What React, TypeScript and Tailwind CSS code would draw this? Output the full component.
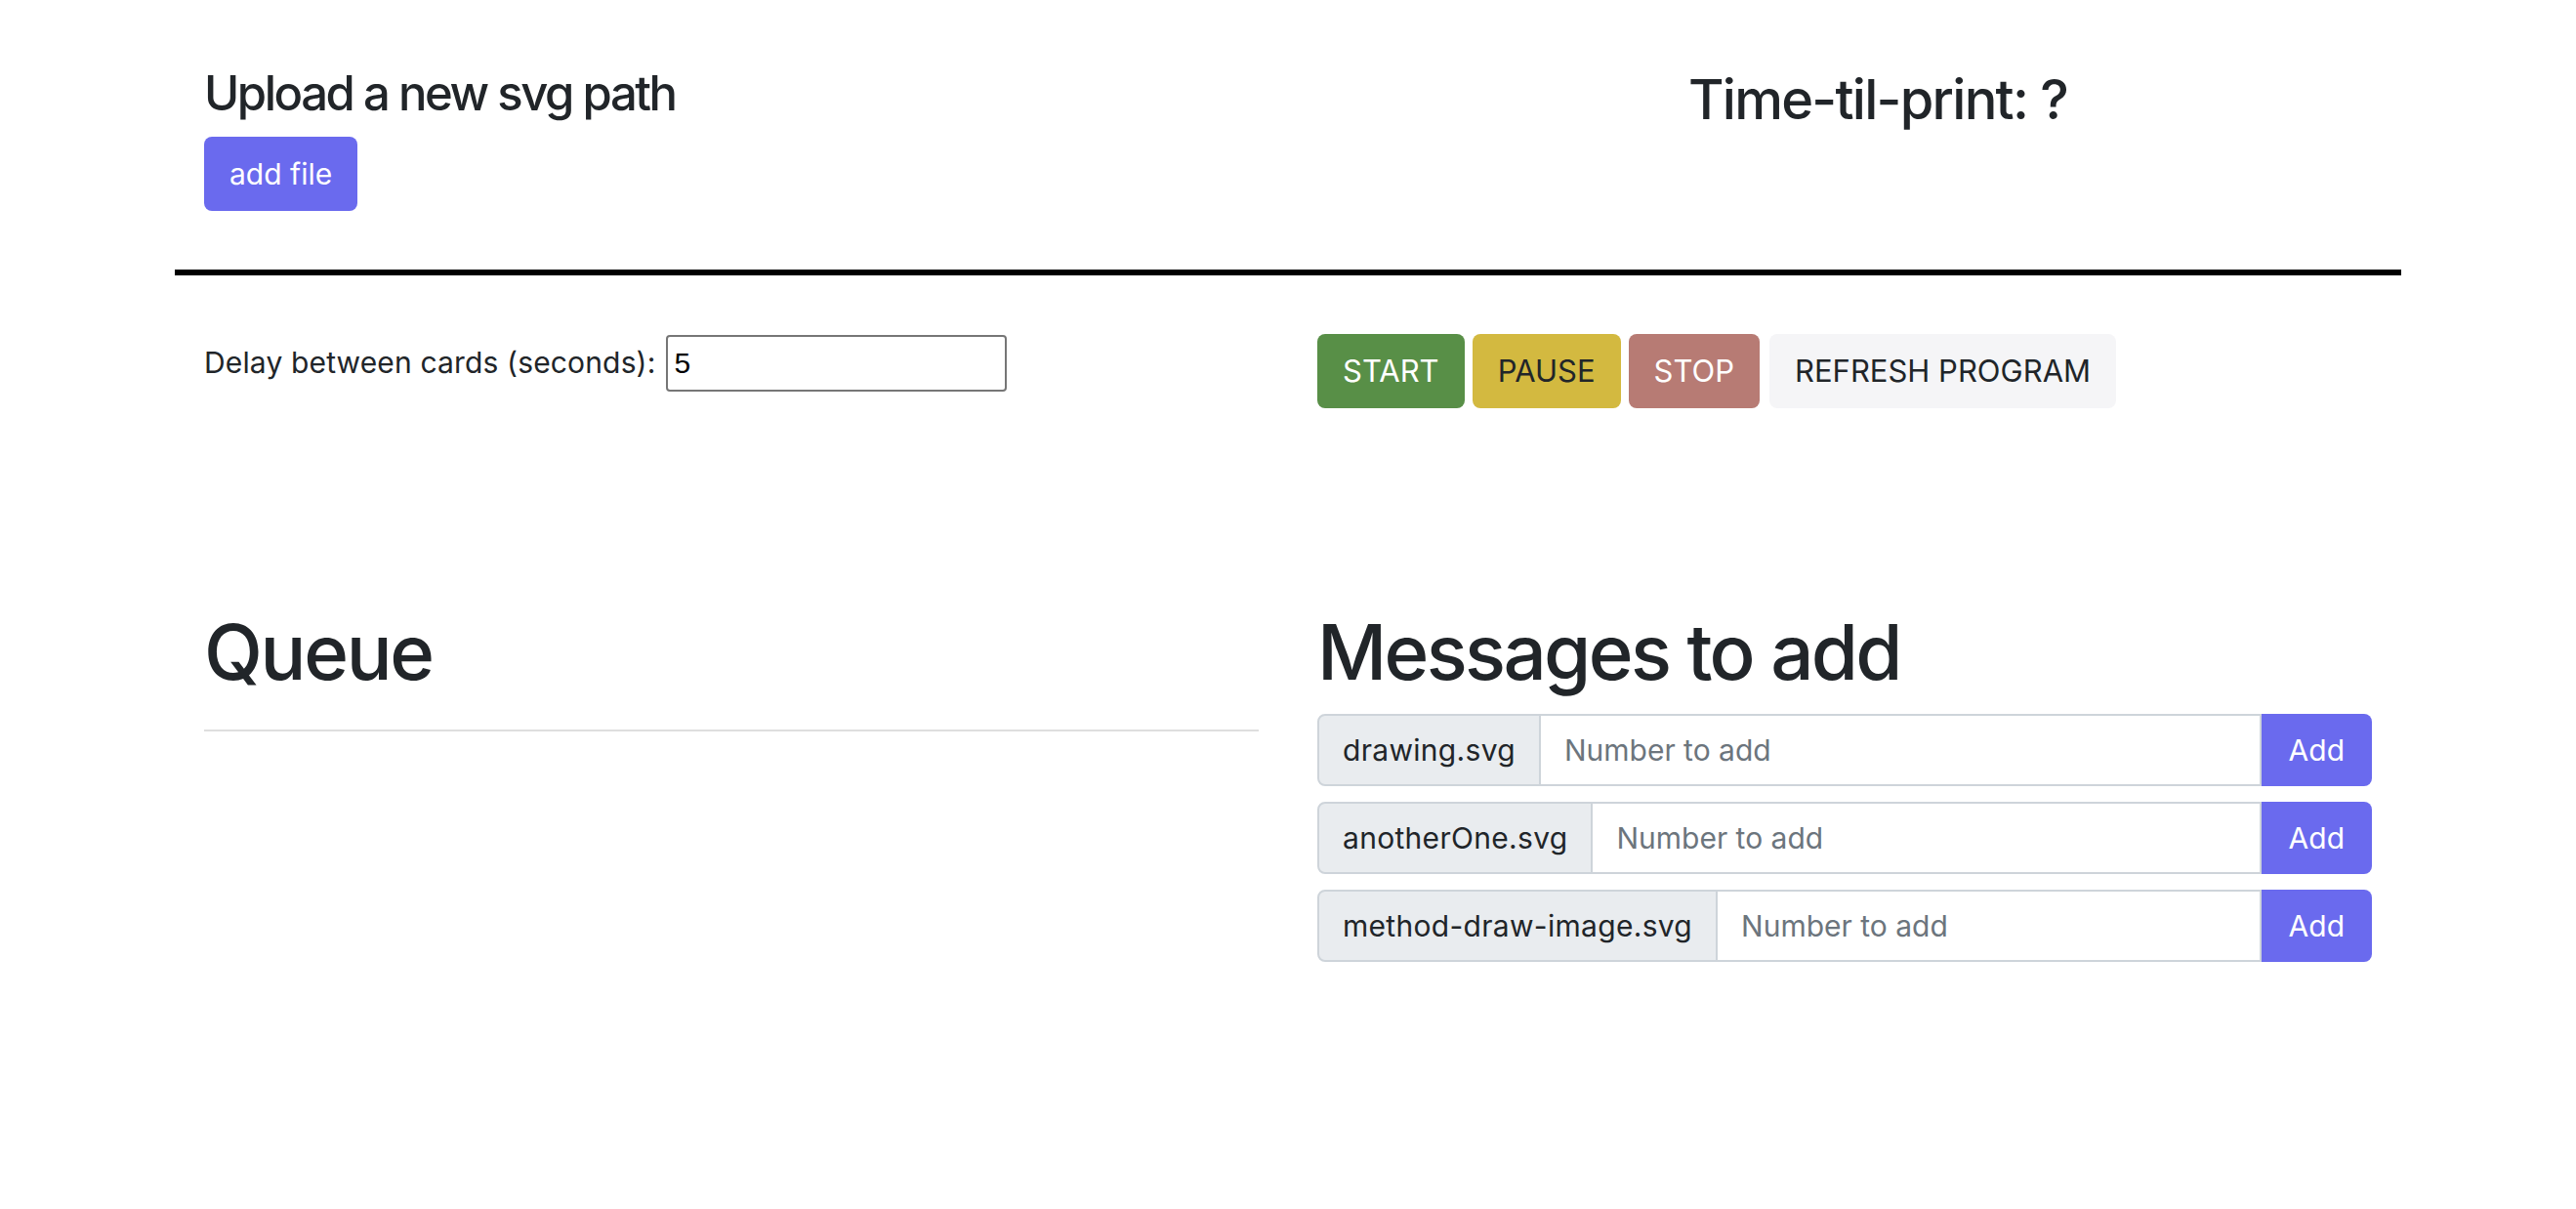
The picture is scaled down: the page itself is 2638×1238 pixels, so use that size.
import { useState } from 'react';

const files = ['drawing.svg', 'anotherOne.svg', 'method-draw-image.svg'];

function MessageRow({ name }: { name: string }) {
  const [count, setCount] = useState('');
  return (
    <div className="flex h-[74px]">
      <span className="flex items-center px-[24px] bg-[#e9ecef] border-2 border-[#ced4da] rounded-l-[8px] text-[30px] tracking-[0.01em] text-[#212529]">
        {name}
      </span>
      <input
        type="number"
        value={count}
        onChange={(e) => setCount(e.target.value)}
        placeholder="Number to add"
        className="flex-1 min-w-0 border-2 border-l-0 border-[#ced4da] px-[24px] text-[30px] text-[#212529] placeholder:text-[#6c757d] outline-none"
      />
      <button className="px-[28px] bg-[#6a6aee] text-white text-[30px] rounded-r-[8px]">Add</button>
    </div>
  );
}

export default function App() {
  const [delay, setDelay] = useState('5');

  return (
    <div className="min-h-screen bg-white text-[#212529] font-['Inter',sans-serif]">
      <div className="w-[2280px] mx-auto">
        {/* upload + timer */}
        <div className="px-[30px] pt-[66px] grid grid-cols-2 gap-[60px]">
          <div className="flex flex-col items-start">
            <h3 className="text-[49px] leading-[60px] font-medium tracking-[-0.05em]">Upload a new svg path</h3>
            <button className="mt-[14px] h-[76px] px-[26px] rounded-[8px] bg-[#6a6aee] text-white text-[30px]">
              add file
            </button>
          </div>
          <div className="pl-[380px] pt-[2px]">
            <h2 className="text-[56px] leading-[68px] font-medium tracking-[-0.031em]">Time-til-print: ?</h2>
          </div>
        </div>

        <div className="mt-[60px] h-[6px] bg-black" />

        {/* controls */}
        <div className="mt-[60px] px-[30px] grid grid-cols-2 gap-[60px]">
          <div className="flex items-baseline pt-[1px]">
            <span className="text-[30px] tracking-[0.005em]">Delay between cards (seconds):</span>
            <input
              type="text"
              value={delay}
              onChange={(e) => setDelay(e.target.value)}
              className="ml-[10px] w-[349px] h-[58px] border-2 border-[#767676] rounded-[4px] px-[7px] text-[30px] leading-[54px] text-black font-['Liberation_Sans',sans-serif] outline-none"
            />
          </div>
          <div className="flex gap-[8px]">
            <button className="h-[76px] px-[26px] rounded-[8px] bg-[#588f47] text-white text-[31px]">START</button>
            <button className="h-[76px] px-[26px] rounded-[8px] bg-[#d3b940] text-[#212529] text-[31px]">PAUSE</button>
            <button className="h-[76px] px-[26px] rounded-[8px] bg-[#b77b74] text-white text-[31px]">STOP</button>
            <button className="ml-[2px] h-[76px] px-[26px] rounded-[8px] bg-[#f5f5f7] text-[#212529] text-[31px]">
              REFRESH PROGRAM
            </button>
          </div>
        </div>

        {/* queue + messages */}
        <div className="mt-[203px] px-[30px] grid grid-cols-2 gap-[60px]">
          <div>
            <h1 className="text-[78px] leading-[94px] font-medium tracking-[-0.03em]">Queue</h1>
            <div className="mt-[32px] h-[2px] bg-[#dedede]" />
          </div>
          <div>
            <h1 className="text-[78px] leading-[94px] font-medium tracking-[-0.034em]">Messages to add</h1>
            <div className="mt-[16px] flex flex-col gap-[16px]">
              {files.map((f) => (
                <MessageRow key={f} name={f} />
              ))}
            </div>
          </div>
        </div>
      </div>
    </div>
  );
}
